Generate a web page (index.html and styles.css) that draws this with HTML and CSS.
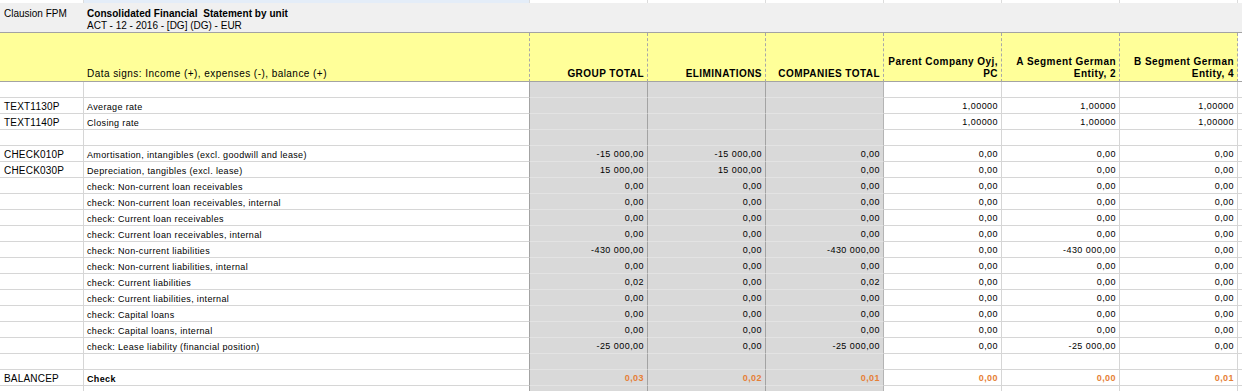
FILE: index.html
```html
<!DOCTYPE html>
<html lang="en">
<head>
    <meta charset="UTF-8">
    <meta name="viewport" content="width=device-width, initial-scale=1.0">
    <title>Consolidated Financial Statement by unit</title>
    <link rel="stylesheet" href="styles.css">
</head>
<body>
    <table class="sheet">
        <colgroup>
            <col class="c-code">
            <col class="c-label">
            <col class="c-num">
            <col class="c-num">
            <col class="c-num">
            <col class="c-num">
            <col class="c-num">
            <col class="c-num">
            <col class="c-rest">
        </colgroup>

        <!-- sliver of the row above -->
        <tr class="strip">
            <td></td><td class="sel"></td><td></td><td></td><td></td><td></td><td></td><td></td><td class="rest"></td>
        </tr>

        <tr class="title-row">
            <td class="title-code">Clausion FPM</td>
            <td class="title" colspan="8">
                <strong>Consolidated Financial&nbsp; Statement by unit</strong><br>
                ACT - 12 - 2016 - [DG] (DG) - EUR
            </td>
        </tr>

        <tr class="head">
            <td class="head-code"></td>
            <td class="head-label">Data signs: Income (+), expenses (-), balance (+)</td>
            <td>GROUP TOTAL</td>
            <td>ELIMINATIONS</td>
            <td>COMPANIES TOTAL</td>
            <td>Parent Company Oyj,<br>PC</td>
            <td>A Segment German<br>Entity, 2</td>
            <td>B Segment German<br>Entity, 4</td>
            <td class="rest"></td>
        </tr>

        <tr class="row">
            <td class="code"></td><td class="label"></td>
            <td class="tot"></td><td class="tot"></td><td class="tot last"></td>
            <td class="num"></td><td class="num"></td><td class="num"></td><td class="rest"></td>
        </tr>
        <tr class="row">
            <td class="code">TEXT1130P</td><td class="label">Average rate</td>
            <td class="tot"></td><td class="tot"></td><td class="tot last"></td>
            <td class="num">1,00000</td><td class="num">1,00000</td><td class="num">1,00000</td><td class="rest"></td>
        </tr>
        <tr class="row">
            <td class="code">TEXT1140P</td><td class="label">Closing rate</td>
            <td class="tot"></td><td class="tot"></td><td class="tot last"></td>
            <td class="num">1,00000</td><td class="num">1,00000</td><td class="num">1,00000</td><td class="rest"></td>
        </tr>
        <tr class="row">
            <td class="code"></td><td class="label"></td>
            <td class="tot"></td><td class="tot"></td><td class="tot last"></td>
            <td class="num"></td><td class="num"></td><td class="num"></td><td class="rest"></td>
        </tr>
        <tr class="row">
            <td class="code">CHECK010P</td><td class="label">Amortisation, intangibles (excl. goodwill and lease)</td>
            <td class="tot">-15 000,00</td><td class="tot">-15 000,00</td><td class="tot last">0,00</td>
            <td class="num">0,00</td><td class="num">0,00</td><td class="num">0,00</td><td class="rest"></td>
        </tr>
        <tr class="row">
            <td class="code">CHECK030P</td><td class="label">Depreciation, tangibles (excl. lease)</td>
            <td class="tot">15 000,00</td><td class="tot">15 000,00</td><td class="tot last">0,00</td>
            <td class="num">0,00</td><td class="num">0,00</td><td class="num">0,00</td><td class="rest"></td>
        </tr>
        <tr class="row">
            <td class="code"></td><td class="label">check: Non-current loan receivables</td>
            <td class="tot">0,00</td><td class="tot">0,00</td><td class="tot last">0,00</td>
            <td class="num">0,00</td><td class="num">0,00</td><td class="num">0,00</td><td class="rest"></td>
        </tr>
        <tr class="row">
            <td class="code"></td><td class="label">check: Non-current loan receivables, internal</td>
            <td class="tot">0,00</td><td class="tot">0,00</td><td class="tot last">0,00</td>
            <td class="num">0,00</td><td class="num">0,00</td><td class="num">0,00</td><td class="rest"></td>
        </tr>
        <tr class="row">
            <td class="code"></td><td class="label">check: Current loan receivables</td>
            <td class="tot">0,00</td><td class="tot">0,00</td><td class="tot last">0,00</td>
            <td class="num">0,00</td><td class="num">0,00</td><td class="num">0,00</td><td class="rest"></td>
        </tr>
        <tr class="row">
            <td class="code"></td><td class="label">check: Current loan receivables, internal</td>
            <td class="tot">0,00</td><td class="tot">0,00</td><td class="tot last">0,00</td>
            <td class="num">0,00</td><td class="num">0,00</td><td class="num">0,00</td><td class="rest"></td>
        </tr>
        <tr class="row">
            <td class="code"></td><td class="label">check: Non-current liabilities</td>
            <td class="tot">-430 000,00</td><td class="tot">0,00</td><td class="tot last">-430 000,00</td>
            <td class="num">0,00</td><td class="num">-430 000,00</td><td class="num">0,00</td><td class="rest"></td>
        </tr>
        <tr class="row">
            <td class="code"></td><td class="label">check: Non-current liabilities, internal</td>
            <td class="tot">0,00</td><td class="tot">0,00</td><td class="tot last">0,00</td>
            <td class="num">0,00</td><td class="num">0,00</td><td class="num">0,00</td><td class="rest"></td>
        </tr>
        <tr class="row">
            <td class="code"></td><td class="label">check: Current liabilities</td>
            <td class="tot">0,02</td><td class="tot">0,00</td><td class="tot last">0,02</td>
            <td class="num">0,00</td><td class="num">0,00</td><td class="num">0,00</td><td class="rest"></td>
        </tr>
        <tr class="row">
            <td class="code"></td><td class="label">check: Current liabilities, internal</td>
            <td class="tot">0,00</td><td class="tot">0,00</td><td class="tot last">0,00</td>
            <td class="num">0,00</td><td class="num">0,00</td><td class="num">0,00</td><td class="rest"></td>
        </tr>
        <tr class="row">
            <td class="code"></td><td class="label">check: Capital loans</td>
            <td class="tot">0,00</td><td class="tot">0,00</td><td class="tot last">0,00</td>
            <td class="num">0,00</td><td class="num">0,00</td><td class="num">0,00</td><td class="rest"></td>
        </tr>
        <tr class="row">
            <td class="code"></td><td class="label">check: Capital loans, internal</td>
            <td class="tot">0,00</td><td class="tot">0,00</td><td class="tot last">0,00</td>
            <td class="num">0,00</td><td class="num">0,00</td><td class="num">0,00</td><td class="rest"></td>
        </tr>
        <tr class="row">
            <td class="code"></td><td class="label">check: Lease liability (financial position)</td>
            <td class="tot">-25 000,00</td><td class="tot">0,00</td><td class="tot last">-25 000,00</td>
            <td class="num">0,00</td><td class="num">-25 000,00</td><td class="num">0,00</td><td class="rest"></td>
        </tr>
        <tr class="row">
            <td class="code"></td><td class="label"></td>
            <td class="tot"></td><td class="tot"></td><td class="tot last"></td>
            <td class="num"></td><td class="num"></td><td class="num"></td><td class="rest"></td>
        </tr>
        <tr class="row balance">
            <td class="code">BALANCEP</td><td class="label"><strong>Check</strong></td>
            <td class="tot">0,03</td><td class="tot">0,02</td><td class="tot last">0,01</td>
            <td class="num">0,00</td><td class="num">0,00</td><td class="num">0,01</td><td class="rest"></td>
        </tr>
        <tr class="row">
            <td class="code"></td><td class="label"></td>
            <td class="tot"></td><td class="tot"></td><td class="tot last"></td>
            <td class="num"></td><td class="num"></td><td class="num"></td><td class="rest"></td>
        </tr>
    </table>
</body>
</html>
```

FILE: styles.css
```css
body {
    margin: 0;
    font-family: 'Liberation Sans', Arial, sans-serif;
    font-size: 9px;
    color: #000;
    background: white;
    overflow: hidden;
}
.sheet {
    border-collapse: separate;
    border-spacing: 0;
    table-layout: fixed;
    width: 1242px;
}
.c-code { width: 84px; }
.c-label { width: 446px; }
.c-num { width: 118px; }
.c-rest { width: 4px; }
.sheet td {
    padding: 0;
    white-space: nowrap;
    overflow: hidden;
}

/* sliver row at the very top */
.strip td {
    height: 3px;
    border-right: 1px solid #dcdcdc;
}
.strip td.sel {
    background: #e4edf8;
}
.strip td.rest {
    border-right: none;
}

/* report title */
.title-row td {
    height: 29px;
    background: #f0f0f0;
    border-bottom: 1px solid #a3a3a3;
    vertical-align: top;
    padding-top: 5px;
    line-height: 12px;
    font-size: 10px;
    box-sizing: border-box;
}
.title-code {
    padding-left: 4px !important;
}
.title {
    padding-left: 3px !important;
}
.title strong {
    letter-spacing: 0.05px;
}

/* yellow column header */
.head td {
    height: 47px;
    background: #ffff99;
    border-right: 1px dashed #a8a8a8;
    border-bottom: 1px solid #a3a3a3;
    vertical-align: bottom;
    text-align: right;
    font-size: 10px;
    font-weight: bold;
    letter-spacing: 0.45px;
    line-height: 12px;
    padding: 0 3px 1px 0;
}
.head td.head-code {
    border-right: none;
}
.head td.head-label {
    text-align: left;
    font-weight: normal;
    letter-spacing: 0.45px;
    padding-left: 3px;
}
.head td.rest {
    background: white;
    border-right: none;
}

/* data rows: 15px of cell + 1px grid line */
.row td {
    height: 13px;
    padding-top: 2px;
    line-height: 13px;
    border-right: 1px solid #d6d6d6;
    border-bottom: 1px solid #d6d6d6;
    vertical-align: top;
}
.row td.code {
    font-size: 10px;
    letter-spacing: 0.2px;
    padding-left: 4px;
    padding-top: 3px;
    height: 12px;
    line-height: 12px;
}
.row td.label {
    padding-left: 3px;
    padding-top: 3px;
    height: 12px;
    line-height: 12px;
    letter-spacing: 0.35px;
    border-right-color: #a3a3a3;
}
.row td.tot {
    background: #d9d9d9;
    border-right-color: #a3a3a3;
    border-bottom-color: #e3e3e3;
    text-align: right;
    padding-right: 3px;
    letter-spacing: 0.45px;
}
.row td.tot.last {
    border-right-color: #b4b4b4;
}
.row td.num {
    text-align: right;
    padding-right: 3px;
    letter-spacing: 0.45px;
}
.row td.rest {
    border-right: none;
}
.balance td.tot,
.balance td.num {
    color: #e67f36;
    font-weight: bold;
}
```
